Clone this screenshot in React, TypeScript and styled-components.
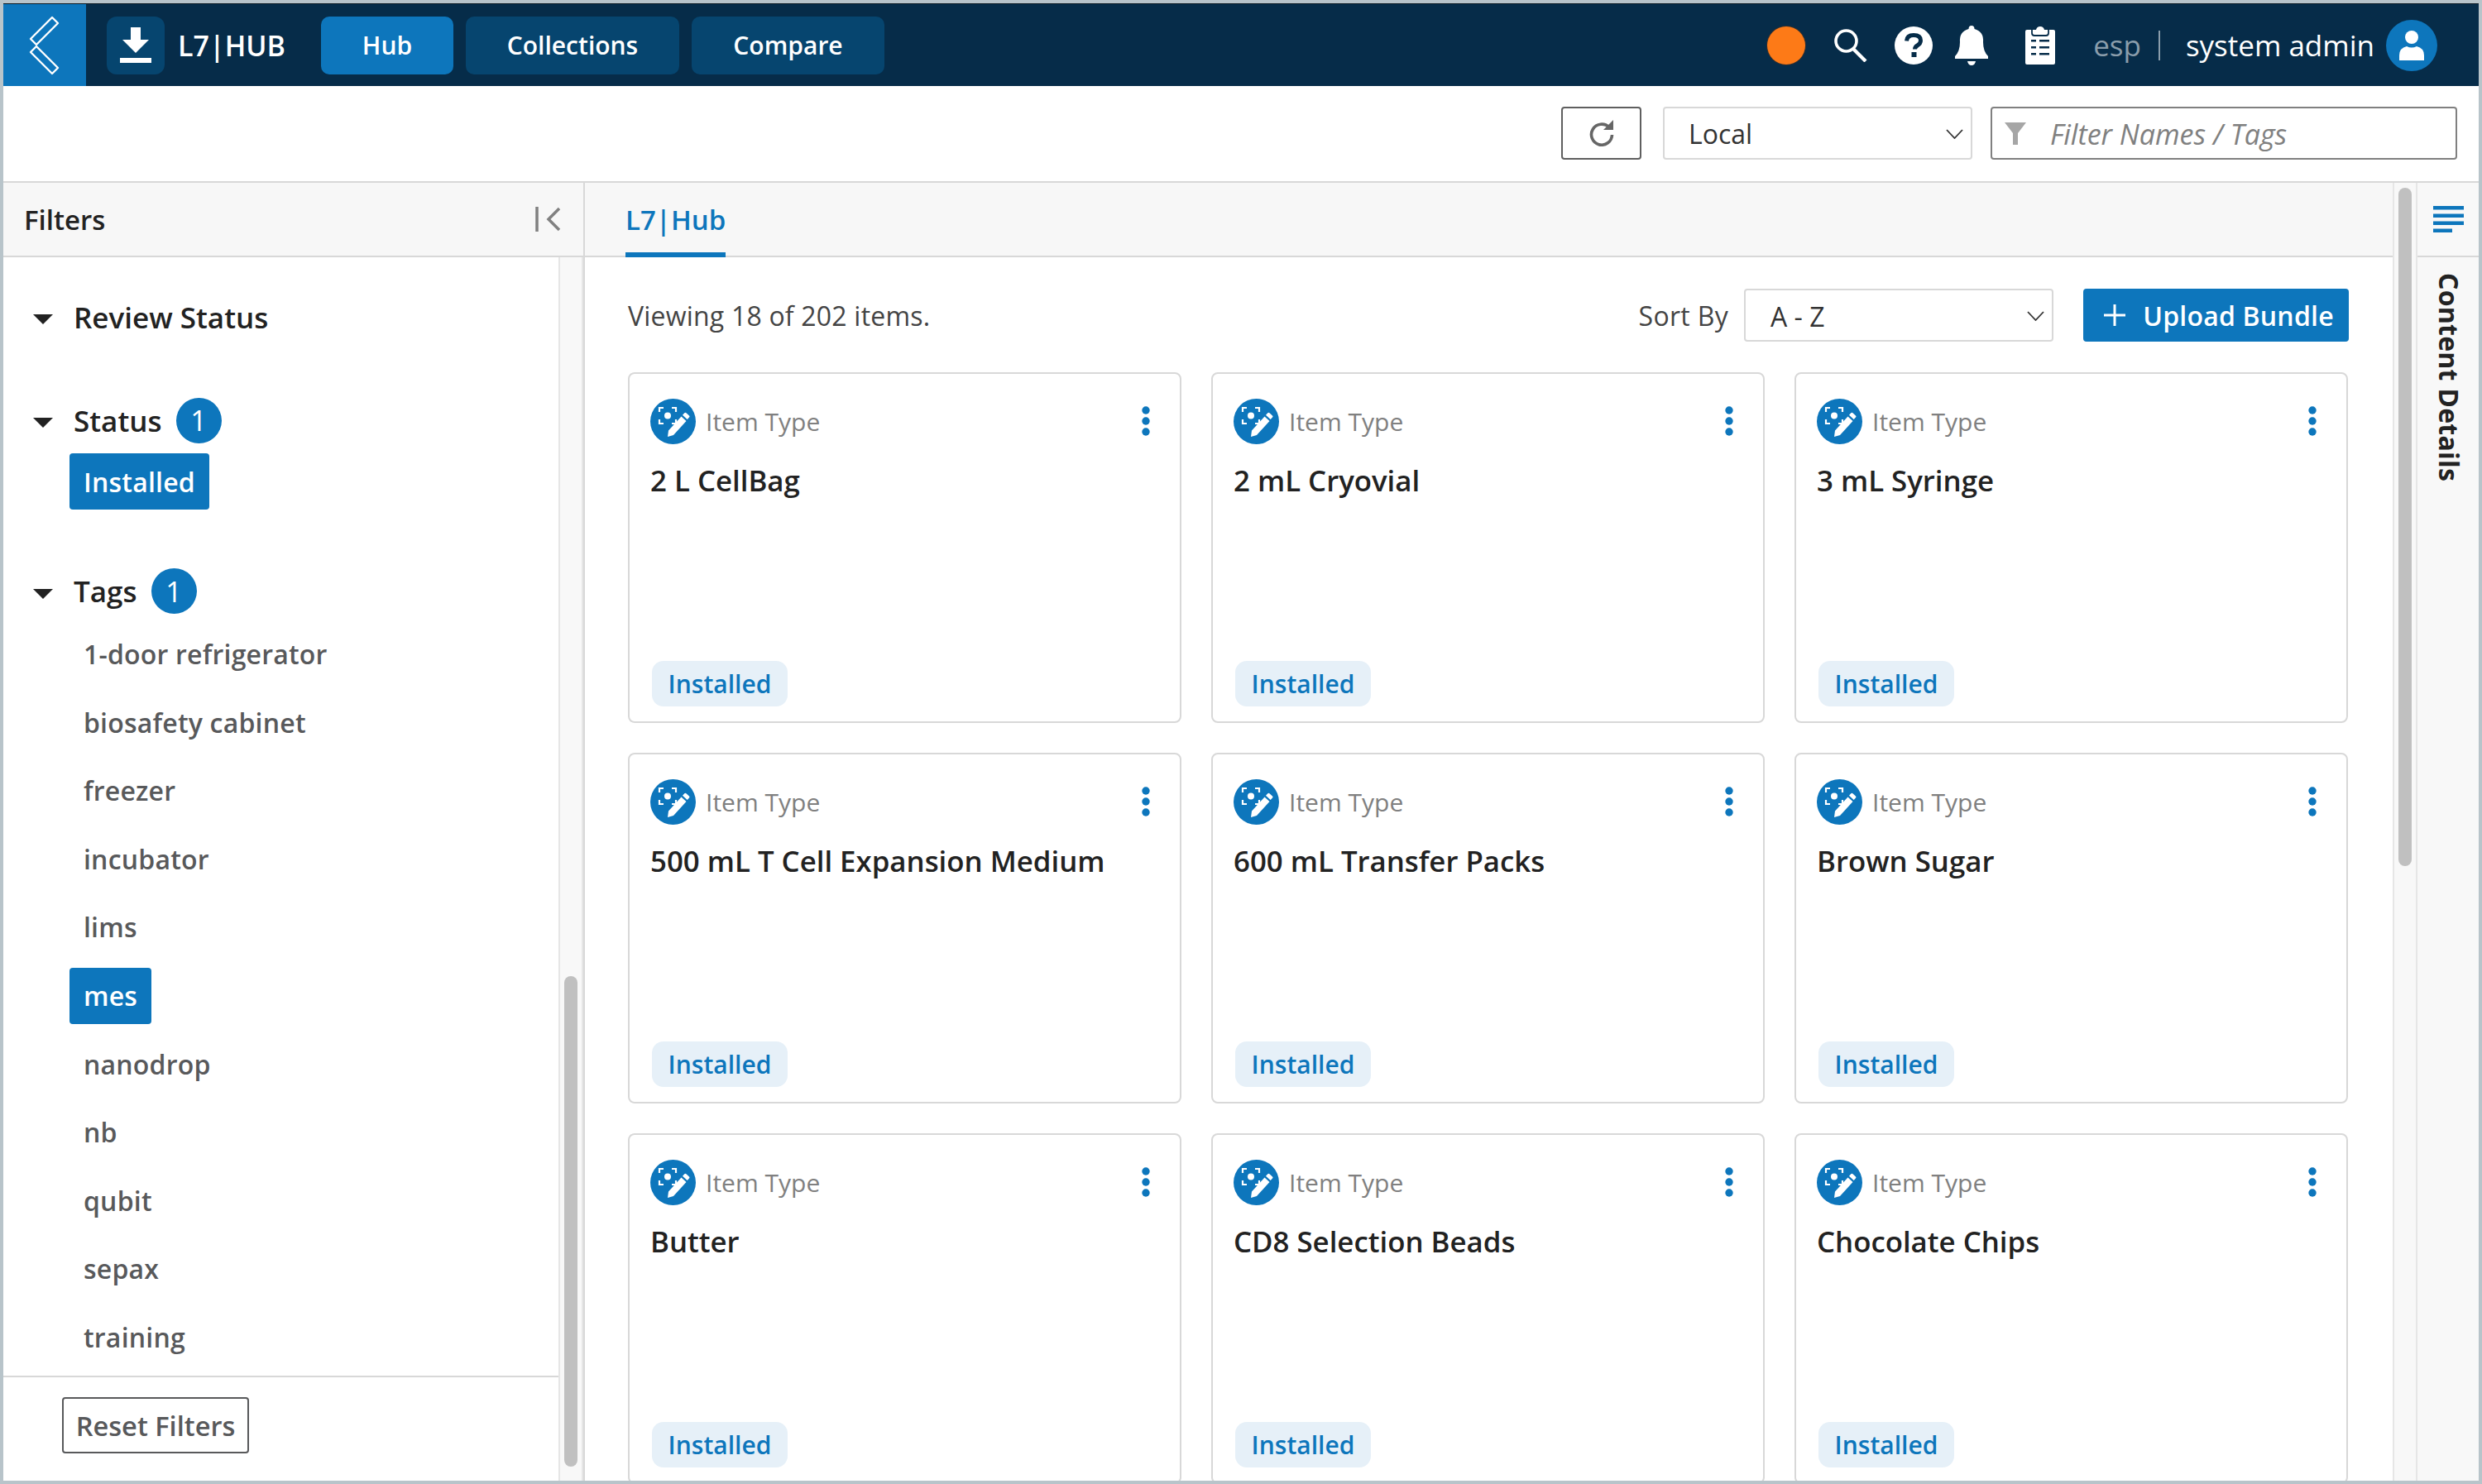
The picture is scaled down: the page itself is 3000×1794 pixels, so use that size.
import React from "react";
import styled, { createGlobalStyle } from "styled-components";

const Global = createGlobalStyle`
  html, body { margin: 0; padding: 0; background: #fff; }
  * { box-sizing: border-box; }
  body { font-family: "Open Sans", "Liberation Sans", sans-serif; color: #222; }
`;

const Frame = styled.div`
  width: 3000px; height: 1794px; border: 4px solid #b8c4ca;
  display: flex; flex-direction: column; overflow: hidden; background: #fff;
`;
const Header = styled.header`
  height: 100px; flex: none; display: flex; align-items: center;
  background: #062c49; border-top: 1px solid #0a1a24; color: #fff; padding-right: 50px;
`;
const LogoBox = styled.div`
  width: 100px; height: 100%; background: #0d76bc; display: flex; align-items: center; justify-content: center;
`;
const DownloadBox = styled.div`
  width: 70px; height: 70px; margin-left: 25px; border-radius: 12px; background: #06456f;
  display: flex; align-items: center; justify-content: center;
`;
const Brand = styled.div`
  font-size: 34px; font-weight: 600; margin-left: 16px; width: 173px; white-space: nowrap;
`;
const NavButton = styled.div<{ $active?: boolean; $w: number }>`
  width: ${p => p.$w}px; height: 70px; margin-right: 15px; border-radius: 10px;
  background: ${p => (p.$active ? "#0d76bc" : "#06456f")};
  display: flex; align-items: center; justify-content: center;
  font-size: 30px; font-weight: 600; color: #fff;
`;
const HeaderRight = styled.div`
  margin-left: auto; display: flex; align-items: center;
`;
const Dot = styled.div`
  width: 46px; height: 46px; border-radius: 50%; background: #fd7a17; margin-right: 35px;
  box-shadow: 0 0 0 1px rgba(80, 50, 30, 0.6);
`;
const HeaderIcon = styled.svg<{ $mr: number }>`
  display: block; margin-right: ${p => p.$mr}px; fill: #fff;
`;
const Lang = styled.span`
  font-size: 35px; color: #8a9dab; padding-right: 21px; border-right: 2px solid #8a9dab;
  line-height: 36px; height: 36px; display: flex; align-items: center; margin-left: 2px;
`;
const UserName = styled.span`
  font-size: 35px; color: #fff; margin-left: 31px; margin-right: 14px;
`;
const Avatar = styled.div`
  width: 62px; height: 62px; border-radius: 50%; background: #0d76bc;
  display: flex; align-items: center; justify-content: center;
`;

const Toolbar = styled.div`
  height: 117px; flex: none; display: flex; align-items: center; justify-content: flex-end;
  padding: 0 26px 2px 0; border-bottom: 2px solid #d8d8d8; gap: 26px;
`;
const RefreshButton = styled.div`
  width: 97px; height: 64px; border: 2px solid #5f5f5f; border-radius: 4px;
  display: flex; align-items: center; justify-content: center;
`;
const SelectBox = styled.div<{ $w: number; $pl: number }>`
  width: ${p => p.$w}px; height: 64px; border: 2px solid #d8d8d8; border-radius: 4px; background: #fff;
  display: flex; align-items: center; justify-content: space-between;
  padding: 2px 9px 0 ${p => p.$pl}px; font-size: 32px; color: #333;
`;
const FilterInput = styled.div`
  width: 564px; height: 64px; border: 2px solid #808080; border-radius: 4px; margin-left: -4px;
  display: flex; align-items: center; padding: 2px 0 0 15px; gap: 29px;
  font-size: 34px; font-style: italic; color: #808080;
`;

const Body = styled.div`
  flex: 1; min-height: 0; display: flex;
`;
const Sidebar = styled.aside`
  width: 703px; flex: none; display: flex; flex-direction: column; border-right: 2px solid #d8d8d8;
`;
const PanelHeader = styled.div`
  height: 90px; flex: none; background: #f7f7f7; border-bottom: 2px solid #d8d8d8;
  display: flex; align-items: center; justify-content: space-between; padding: 0 26px 0 25px;
  font-size: 33px; font-weight: 600;
`;
const SidebarBody = styled.div`
  flex: 1; min-height: 0; display: flex;
`;
const SidebarMain = styled.div`
  flex: 1; min-width: 0; display: flex; flex-direction: column;
`;
const FilterScroll = styled.div`
  flex: 1; min-height: 0; overflow: hidden; padding-top: 47px;
`;
const GroupHeading = styled.div<{ $mb: number }>`
  display: flex; align-items: center; height: 50px; padding-left: 36px; margin-bottom: ${p => p.$mb}px;
  font-size: 35px; font-weight: 600; color: #222;
`;
const Caret = styled.span`
  width: 0; height: 0; border-left: 12px solid transparent; border-right: 12px solid transparent;
  border-top: 12px solid #222; margin-right: 25px; margin-top: 6px; flex: none;
`;
const CountBadge = styled.span`
  width: 55px; height: 55px; border-radius: 50%; background: #0d76bc; color: #fff;
  display: flex; align-items: center; justify-content: center;
  font-size: 34px; font-weight: 400; margin-left: 17px;
`;
const TagList = styled.div<{ $mb?: number }>`
  display: flex; flex-direction: column; align-items: flex-start; padding-left: 80px;
  margin-bottom: ${p => p.$mb ?? 0}px;
`;
const Tag = styled.div<{ $on?: boolean }>`
  height: 68px; padding: 0 17px; margin-bottom: 14.6px; border-radius: 4px;
  display: flex; align-items: center; letter-spacing: 0.2px;
  font-size: 32px; font-weight: 600;
  background: ${p => (p.$on ? "#0d76bc" : "transparent")};
  color: ${p => (p.$on ? "#fff" : "#58595b")};
`;
const SidebarFooter = styled.div`
  height: 127px; flex: none; border-top: 2px solid #d8d8d8; padding: 24px 0 0 71px;
`;
const ResetButton = styled.div`
  width: 226px; height: 68px; border: 2px solid #58595b; border-radius: 4px;
  display: flex; align-items: center; justify-content: center;
  font-size: 32.6px; font-weight: 600; color: #58595b;
`;
const Track = styled.div<{ $w: number; $pt: number }>`
  width: ${p => p.$w}px; flex: none; background: #f8f8f8;
  border-left: 2px solid #e6e6e6; border-right: 2px solid #e6e6e6;
  padding: ${p => p.$pt}px 5px 15px;
`;
const Thumb = styled.div<{ $h: number }>`
  height: ${p => p.$h}px; border-radius: 8px; background: #c0c0c0;
`;

const Main = styled.main`
  flex: 1; min-width: 0; display: flex; flex-direction: column;
`;
const TabBar = styled.div`
  height: 90px; flex: none; background: #f7f7f7; border-bottom: 2px solid #d8d8d8; padding-left: 49px;
  display: flex;
`;
const Tab = styled.div`
  height: 90px; display: flex; align-items: center; padding-bottom: 2px;
  font-size: 33px; font-weight: 600; color: #0d76bc; border-bottom: 6px solid #0d76bc; padding-top: 6px;
`;
const Content = styled.div`
  flex: 1; min-height: 0; overflow: hidden; padding: 38px 53px 0 52px;
`;
const ContentBar = styled.div`
  height: 64px; display: flex; align-items: center; margin-bottom: 37px;
`;
const Viewing = styled.span`
  font-size: 32px; color: #444; letter-spacing: 0.2px;
`;
const SortLabel = styled.span`
  margin-left: auto; margin-right: 19px; font-size: 32px; color: #444; letter-spacing: 0.3px;
`;
const UploadButton = styled.div`
  width: 321px; height: 64px; margin-left: 36px; padding-left: 6px; background: #0d76bc; border-radius: 4px; color: #fff;
  display: flex; align-items: center; justify-content: center; gap: 20px;
  font-size: 32px; font-weight: 600; letter-spacing: 0.2px;
`;
const Grid = styled.div`
  display: grid; grid-template-columns: repeat(3, 669px); gap: 36px;
`;
const Card = styled.article`
  height: 424px; border: 2px solid #d8d8d8; border-radius: 8px; padding: 29px 25px 18px;
  display: flex; flex-direction: column;
`;
const CardTop = styled.div`
  display: flex; align-items: center; height: 56px;
`;
const ItemType = styled.span`
  font-size: 30px; color: #808080; margin-left: 12px;
`;
const Kebab = styled.svg`
  margin-left: auto; margin-right: 11px; display: block; fill: #0d76bc;
`;
const CardTitle = styled.div`
  font-size: 34.8px; font-weight: 600; color: #222; margin-top: 21px; line-height: 46px;
`;
const Pill = styled.div`
  margin-top: auto; align-self: flex-start; margin-left: 2px; height: 55px; width: 164px;
  border-radius: 14px; background: #e6f0f8; color: #0d76bc;
  display: flex; align-items: center; justify-content: center;
  font-size: 30px; font-weight: 600;
`;
const RightPanel = styled.div`
  width: 74px; flex: none; background: #f8f8f8; display: flex; flex-direction: column;
`;
const RightTop = styled.div`
  height: 90px; flex: none; border-bottom: 2px solid #d8d8d8;
  display: flex; align-items: center; justify-content: center;
`;
const VerticalLabel = styled.div`
  writing-mode: vertical-rl; font-size: 32px; font-weight: 700; color: #222; letter-spacing: 0.25px;
  margin-top: 19px; margin-left: 2px; align-self: center; line-height: 40px;
`;

const ItemIcon = () => (
  <svg width="55" height="55" viewBox="0 0 55 55">
    <circle cx="27.5" cy="27.5" r="27.5" fill="#0d76bc" />
    <path d="M11 16v-5h5M26 11h5v5M31 25v5h-5M16 30h-5v-5" fill="none" stroke="#fff" strokeWidth="2.200" />
    <circle cx="21" cy="20.5" r="4" fill="#fff" />
    <path d="M21 46l1-7.500 15.500-17 6 5.500-15.500 17zM39 19.700l2.300-2.500q1-1 2.200 0l3.500 3.200q1 1 0 2.200l-2.300 2.500z" fill="#fff" />
  </svg>
);

const cards = [
  "2 L CellBag", "2 mL Cryovial", "3 mL Syringe",
  "500 mL T Cell Expansion Medium", "600 mL Transfer Packs", "Brown Sugar",
  "Butter", "CD8 Selection Beads", "Chocolate Chips",
];
const tags = ["1-door refrigerator", "biosafety cabinet", "freezer", "incubator", "lims", "mes", "nanodrop", "nb", "qubit", "sepax", "training"];

const Chevron = () => (
  <svg width="21" height="12" viewBox="0 0 21 12"><path d="M1 1l9.5 10L20 1" fill="none" stroke="#333" strokeWidth="1.800" /></svg>
);

export default function App() {
  return (
    <Frame>
      <Global />
      <Header>
        <LogoBox>
          <svg width="38" height="72" viewBox="0 0 38 72">
            <g fill="none" stroke="#fff" strokeWidth="2.4" strokeLinejoin="round">
              <path d="M28 2l7 7L9 35 2 28z" />
              <path d="M9 37L35 63l-7 7L2 44z" />
            </g>
          </svg>
        </LogoBox>
        <DownloadBox>
          <svg width="38" height="44" viewBox="0 0 38 44" fill="#fff">
            <path d="M13 0h12v15h10L19 31 3 15h10z" />
            <rect x="0" y="37" width="38" height="6" />
          </svg>
        </DownloadBox>
        <Brand>L7|HUB</Brand>
        <NavButton $active $w={160}>Hub</NavButton>
        <NavButton $w={258}>Collections</NavButton>
        <NavButton $w={233}>Compare</NavButton>
        <HeaderRight>
          <Dot />
          <HeaderIcon $mr={33} width="40" height="40" viewBox="0 0 40 40">
            <circle cx="14.500" cy="14.500" r="12.500" fill="none" stroke="#fff" strokeWidth="3.600" />
            <path d="M23 24l15 15" stroke="#fff" strokeWidth="4.200" />
          </HeaderIcon>
          <HeaderIcon $mr={27} width="46" height="46" viewBox="0 0 46 46">
            <circle cx="23" cy="23" r="23" />
            <path d="M14.500 17.500q.5-7 8.500-7 8.500 0 8.500 6.500 0 3.800-4 6-3 1.800-3 4.500" fill="none" stroke="#062c49" strokeWidth="5" />
            <path d="M20.500 31h6v6h-6z" fill="#062c49" />
          </HeaderIcon>
          <HeaderIcon $mr={45} width="40" height="48" viewBox="0 0 40 48">
            <path d="M20 0q3.500 0 3.500 4Q35 7 34 20q0 11 6 17v3H0v-3q6-6 6-17Q5 7 16.500 4 16.500 0 20 0zM15 43h10q-1 5-5 5t-5-5z" />
          </HeaderIcon>
          <HeaderIcon $mr={44} width="36" height="46" viewBox="0 0 36 46">
            <path d="M2 4h11q1-4 5-4t5 4h11q2 0 2 2v38q0 2-2 2H2q-2 0-2-2V6q0-2 2-2z" />
            <path d="M8 4v4q0 3 3 3h14q3 0 3-3V4" fill="none" stroke="#062c49" strokeWidth="1.800" />
            <path d="M7 16h6v2.400H7zM17 16h12v2.400H17zM7 24h6v2.400H7zM17 24h12v2.400H17zM7 32h6v2.400H7zM17 32h12v2.400H17z" fill="#062c49" />
          </HeaderIcon>
          <Lang>esp</Lang>
          <UserName>system admin</UserName>
          <Avatar>
            <svg width="32" height="38" viewBox="0 0 32 38" fill="#fff">
              <circle cx="16" cy="9" r="8" />
              <path d="M1 37v-6q0-9 9-11 6 3 12 0 9 2 9 11v6z" />
            </svg>
          </Avatar>
        </HeaderRight>
      </Header>

      <Toolbar>
        <RefreshButton>
          <svg width="32" height="32" viewBox="0 0 32 32">
            <path d="M25 9A12.500 12.500 0 1 0 28.500 18" fill="none" stroke="#666" strokeWidth="3.600" />
            <path d="M30 0v12H18z" fill="#666" />
          </svg>
        </RefreshButton>
        <SelectBox $w={374} $pl={29}>Local<Chevron /></SelectBox>
        <FilterInput>
          <svg width="26" height="27" viewBox="0 0 26 27"><path d="M0 0h26L16 13v14h-6V13z" fill="#a6a6a6" /></svg>
          Filter Names / Tags
        </FilterInput>
      </Toolbar>

      <Body>
        <Sidebar>
          <PanelHeader>
            Filters
            <svg width="32" height="30" viewBox="0 0 32 30">
              <path d="M2 0v30" stroke="#808080" strokeWidth="3.500" />
              <path d="M29 2L16 15l13 13" fill="none" stroke="#808080" strokeWidth="3.500" />
            </svg>
          </PanelHeader>
          <SidebarBody>
            <SidebarMain>
              <FilterScroll>
                <GroupHeading $mb={75}><Caret />Review Status</GroupHeading>
                <GroupHeading $mb={15}><Caret />Status<CountBadge>1</CountBadge></GroupHeading>
                <TagList $mb={59}><Tag $on>Installed</Tag></TagList>
                <GroupHeading $mb={17}><Caret />Tags<CountBadge>1</CountBadge></GroupHeading>
                <TagList>
                  {tags.map(t => <Tag key={t} $on={t === "mes"}>{t}</Tag>)}
                </TagList>
              </FilterScroll>
              <SidebarFooter><ResetButton>Reset Filters</ResetButton></SidebarFooter>
            </SidebarMain>
            <Track $w={30} $pt={869}><Thumb $h={593} /></Track>
          </SidebarBody>
        </Sidebar>

        <Main>
          <TabBar><Tab>L7|Hub</Tab></TabBar>
          <Content>
            <ContentBar>
              <Viewing>Viewing 18 of 202 items.</Viewing>
              <SortLabel>Sort By</SortLabel>
              <SelectBox $w={374} $pl={30}>A - Z<Chevron /></SelectBox>
              <UploadButton>
                <svg width="28" height="28" viewBox="0 0 28 28"><path d="M14 1v26M1 14h26" stroke="#fff" strokeWidth="3" /></svg>
                Upload Bundle
              </UploadButton>
            </ContentBar>
            <Grid>
              {cards.map(c => (
                <Card key={c}>
                  <CardTop>
                    <ItemIcon />
                    <ItemType>Item Type</ItemType>
                    <Kebab width="10" height="36" viewBox="0 0 10 36">
                      <circle cx="5" cy="5" r="4.700" />
                      <circle cx="5" cy="18" r="4.700" />
                      <circle cx="5" cy="31" r="4.700" />
                    </Kebab>
                  </CardTop>
                  <CardTitle>{c}</CardTitle>
                  <Pill>Installed</Pill>
                </Card>
              ))}
            </Grid>
          </Content>
        </Main>

        <Track $w={30} $pt={6}><Thumb $h={820} /></Track>

        <RightPanel>
          <RightTop>
            <svg width="37" height="32" viewBox="0 0 37 32" fill="#0d76bc">
              <rect width="37" height="4.500" y="0" />
              <rect width="37" height="4.500" y="9.500" />
              <rect width="37" height="4.500" y="18.500" />
              <rect width="23" height="4.500" y="27.500" />
            </svg>
          </RightTop>
          <VerticalLabel>Content Details</VerticalLabel>
        </RightPanel>
      </Body>
    </Frame>
  );
}
